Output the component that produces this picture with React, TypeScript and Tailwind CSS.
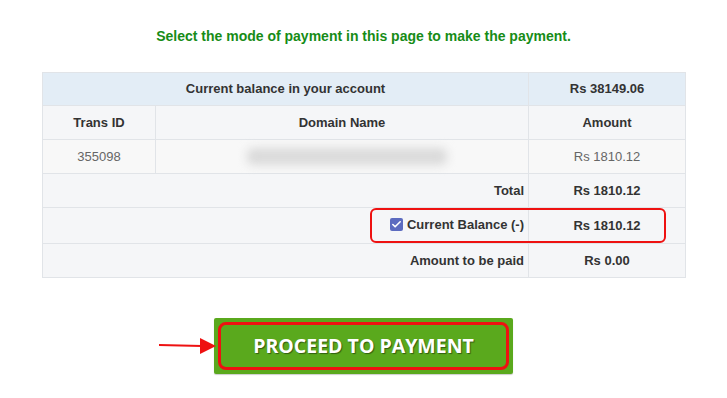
import { Check } from 'lucide-react'

const cell = 'border border-[#e1e4e8] px-3 text-[13px]'

export default function App() {
	return (
		<div
			className="min-h-[398px] w-[727px] bg-white"
			style={{ fontFamily: '"Liberation Sans", Arial, sans-serif' }}
		>
			<p className="pt-[26px] text-center text-[14px] font-bold text-[#178c17]">
				Select the mode of payment in this page to make the payment.
			</p>

			<div className="relative mx-[42px] mt-[25px]">
				<table className="w-[644px] border-collapse text-[#333]">
					<tbody>
						<tr className="h-[33px] bg-[#e3edf6]">
							<td colSpan={2} className={`${cell} text-center font-bold`}>
								Current balance in your account
							</td>
							<td className={`${cell} w-[157px] text-center font-bold`}>
								Rs 38149.06
							</td>
						</tr>
						<tr className="h-[34px] bg-[#f5f6f8]">
							<td className={`${cell} w-[113px] text-center font-bold`}>
								Trans ID
							</td>
							<td className={`${cell} text-center font-bold`}>Domain Name</td>
							<td className={`${cell} text-center font-bold`}>Amount</td>
						</tr>
						<tr className="h-[34px] bg-[#f8f8f8] text-[#666]">
							<td className={`${cell} text-center`}>355098</td>
							<td className={`${cell}`}>
								<div className="flex justify-center">
									<div className="ml-[10px] h-[17px] w-[200px] rounded-[6px] bg-[#dadada] blur-[5px]" />
								</div>
							</td>
							<td className={`${cell} text-center`}>Rs 1810.12</td>
						</tr>
						<tr className="h-[34px] bg-[#f5f6f8]">
							<td colSpan={2} className={`${cell} pr-[4px] text-right font-bold`}>
								Total
							</td>
							<td className={`${cell} text-center font-bold`}>Rs 1810.12</td>
						</tr>
						<tr className="h-[36px] bg-[#f5f6f8]">
							<td colSpan={2} className={`${cell} pr-[4px] text-right font-bold`}>
								<span className="inline-flex items-center gap-[4px]">
									<span className="flex h-[13px] w-[13px] items-center justify-center rounded-[2px] bg-[#5c6bc0]">
										<Check className="h-[11px] w-[11px] text-white" strokeWidth={3.5} />
									</span>
									Current Balance (-)
								</span>
							</td>
							<td className={`${cell} text-center font-bold`}>Rs 1810.12</td>
						</tr>
						<tr className="h-[34px] bg-[#f5f6f8]">
							<td colSpan={2} className={`${cell} pr-[4px] text-right font-bold`}>
								Amount to be paid
							</td>
							<td className={`${cell} text-center font-bold`}>Rs 0.00</td>
						</tr>
					</tbody>
				</table>
				{/* annotation around the balance row */}
				<div className="pointer-events-none absolute left-[328px] top-[136px] h-[35px] w-[296px] rounded-[6px] border-2 border-[#ee1111]" />
			</div>

			<div className="mt-[40px] flex items-center justify-center">
				<div className="relative">
					<svg
						className="absolute left-[-56px] top-[19px]"
						width="60"
						height="18"
						viewBox="0 0 60 18"
					>
						<line x1="1" y1="8" x2="44" y2="9" stroke="#ee1111" strokeWidth="2" />
						<polygon points="42,1 58,9 42,17" fill="#ee1111" />
					</svg>
					<button className="flex h-[56px] w-[299px] items-center justify-center rounded-[2px] bg-[#5aa91d] p-[4px] shadow-[0_1px_1px_rgba(0,0,0,0.2)]">
						<span
							className="flex h-full w-full items-center justify-center rounded-[8px] border-[3px] border-[#ee1111] text-[19.5px] font-bold text-white [text-shadow:1px_1px_1px_rgba(0,0,0,0.45)]"
							style={{ fontFamily: '"Open Sans", sans-serif' }}
						>
							PROCEED TO PAYMENT
						</span>
					</button>
				</div>
			</div>
		</div>
	)
}
